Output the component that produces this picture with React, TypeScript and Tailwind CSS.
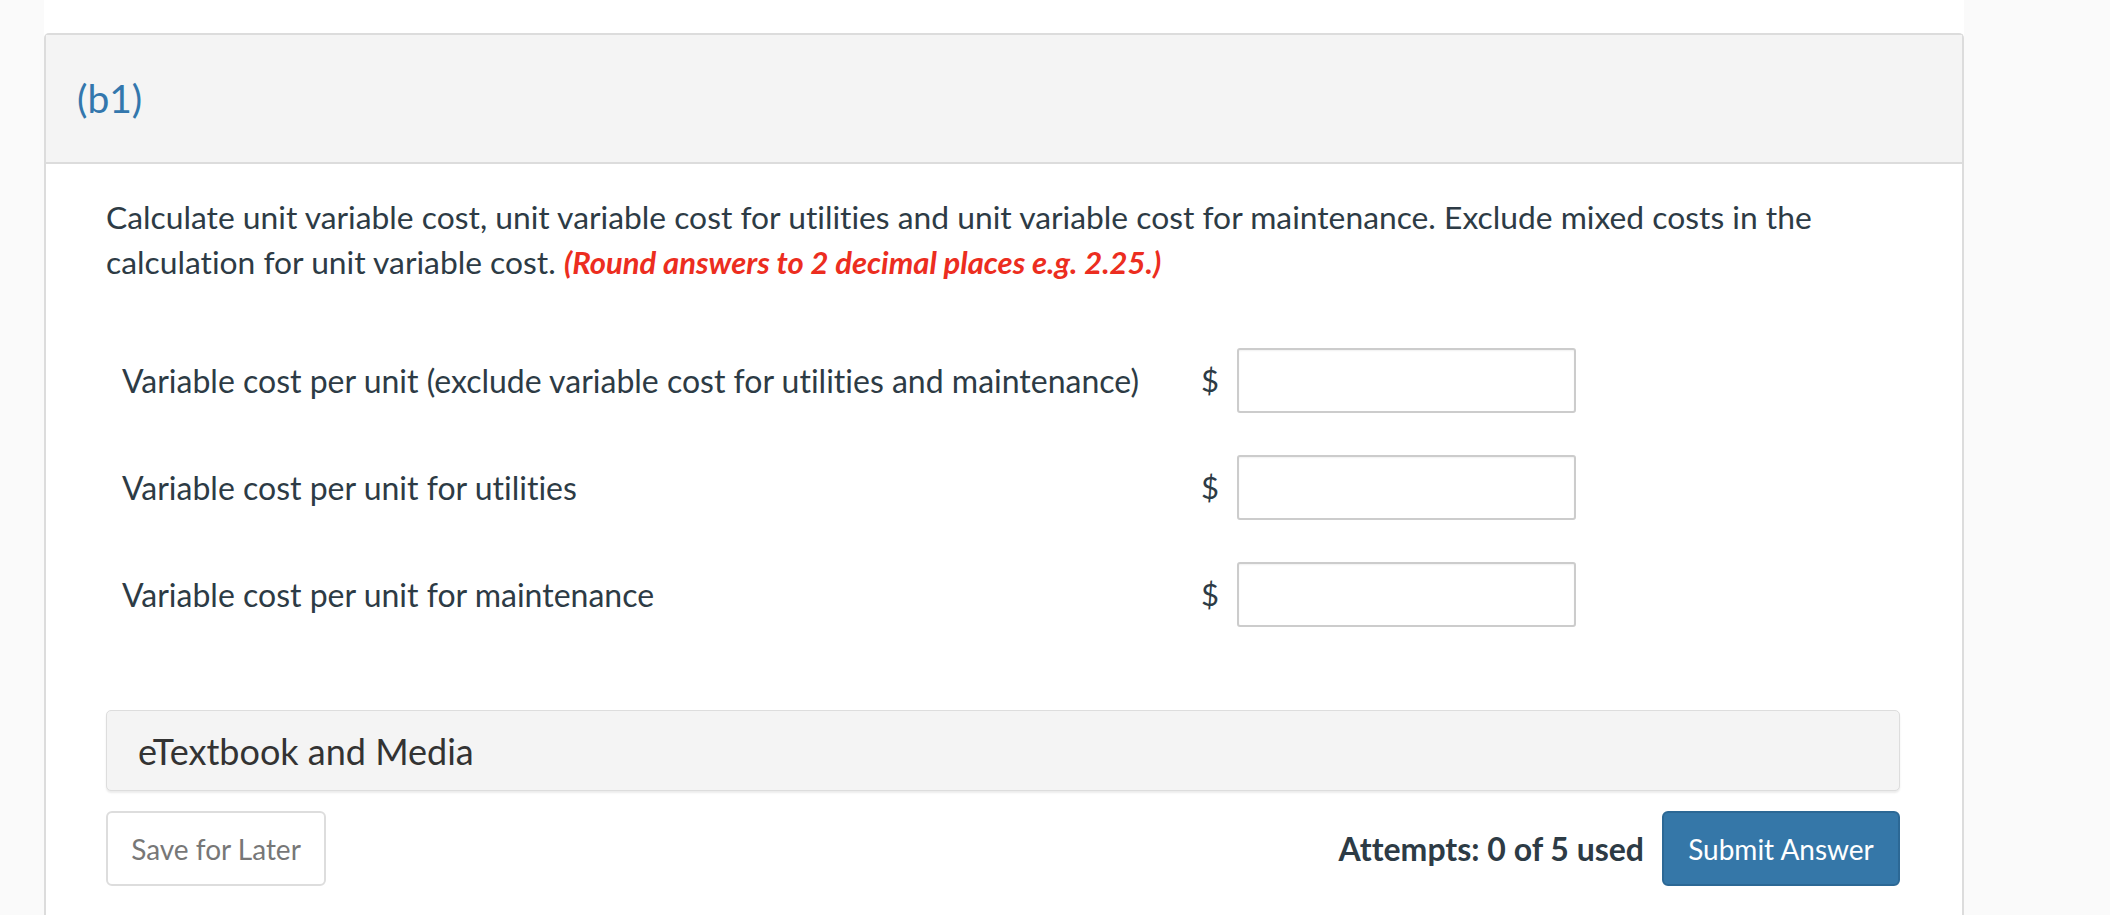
import React from "react";

const rows = [
  "Variable cost per unit (exclude variable cost for utilities and maintenance)",
  "Variable cost per unit for utilities",
  "Variable cost per unit for maintenance",
];

export default function App() {
  return (
    <div
      className="flex h-screen overflow-hidden bg-[#fafafa] text-[#2d3b45] [font-variant-ligatures:none]"
      style={{ fontFamily: "Lato, 'Open Sans', sans-serif" }}
    >
      <div className="ml-[44px] w-[1920px] shrink-0 bg-white pt-[33px]">
        {/* question card */}
        <div className="min-h-[900px] rounded-t-[5px] border-2 border-b-0 border-[#dcdcdc]">
          <div className="flex h-[129px] items-center border-b-2 border-[#dcdcdc] bg-[#f4f4f4] pl-[31px]">
            <h2 className="text-[39px] leading-none font-normal text-[#3377ad]">(b1)</h2>
          </div>

          <div className="pl-[60px] pr-[62px] pt-[31px]">
            <p className="text-[31.8px] leading-[45px]">
              Calculate unit variable cost, unit variable cost for utilities and unit variable cost for maintenance. Exclude mixed costs in the
              <br />
              calculation for unit variable cost.{" "}
              <span className="text-[31px] font-bold italic text-[#ec2d20]">
                (Round answers to 2 decimal places e.g. 2.25.)
              </span>
            </p>

            <div className="mt-[63px] flex flex-col gap-[42px]">
              {rows.map((label) => (
                <div key={label} className="flex h-[65px] items-center">
                  <label className="w-[1095px] shrink-0 pl-[16px] text-[32px] leading-none">{label}</label>
                  <span className="w-[18px] text-[31px] leading-none">$</span>
                  <input
                    type="text"
                    className="ml-[18px] h-[65px] w-[339px] rounded-[3px] border-2 border-[#cccccc] bg-white px-3 text-[28px] shadow-[inset_0_1px_2px_rgba(0,0,0,0.06)] outline-none"
                  />
                </div>
              ))}
            </div>

            <div className="mt-[83px] flex h-[81px] items-center rounded-[5px] border border-[#dddddd] bg-[#f4f4f4] pl-[31px] shadow-[0_2px_2px_rgba(0,0,0,0.08)]">
              <span className="text-[36px] leading-none text-[#333333]">eTextbook and Media</span>
            </div>

            <div className="mt-[20px] flex items-center justify-between">
              <button className="h-[75px] w-[220px] rounded-[6px] border-2 border-[#dddddd] bg-white text-[28px] text-[#777777]">
                Save for Later
              </button>
              <div className="flex items-center gap-[18px]">
                <span className="text-[32px] font-bold">Attempts: 0 of 5 used</span>
                <button className="h-[75px] w-[238px] rounded-[6px] border-2 border-[#2c6895] bg-[#3577a8] text-[28px] text-white">
                  Submit Answer
                </button>
              </div>
            </div>
          </div>
        </div>
      </div>
    </div>
  );
}
